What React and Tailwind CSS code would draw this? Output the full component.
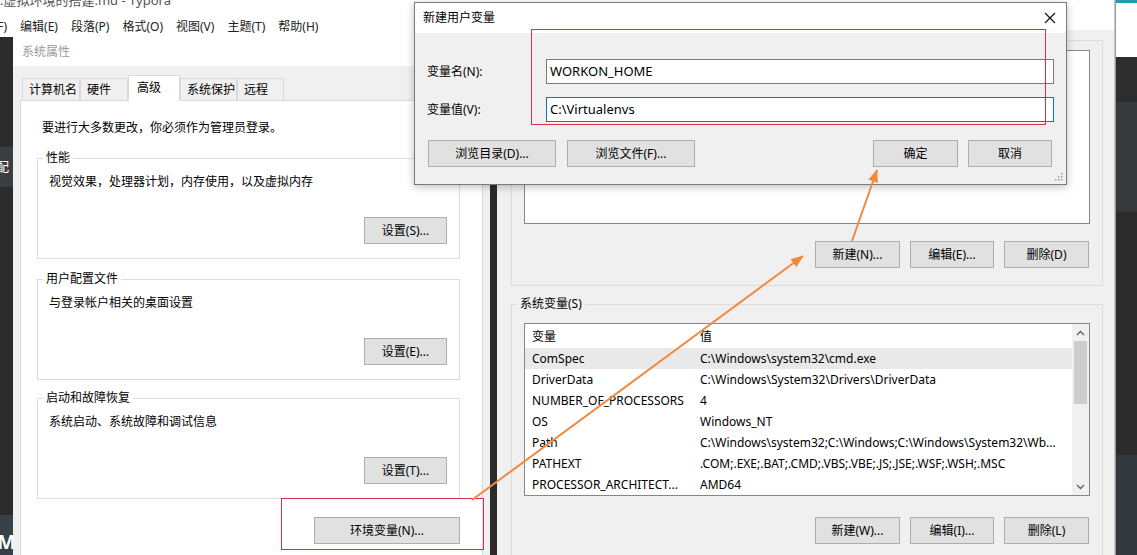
import React from "react";

const Btn = ({ children, className = "" }) => (
  <div
    className={
      "flex items-center justify-center h-[27px] bg-[#e1e1e1] border border-[#adadad] text-[12px] text-black " +
      className
    }
  >
    {children}
  </div>
);

const Group = ({ title, text, button }) => (
  <fieldset className="border border-[#dcdcdc] ml-[16px] mr-[22px] flex flex-col pb-[14px]">
    <legend className="ml-[5px] px-[3px] text-[12px] leading-[16px] text-black">{title}</legend>
    <p className="ml-[11px] mt-[8px] text-[12px] leading-[16px] text-black">{text}</p>
    <div className="flex justify-end mt-[27px] mr-[12px]">
      <Btn className="w-[83px]">{button}</Btn>
    </div>
  </fieldset>
);

const tabs = ["计算机名", "硬件", "高级", "系统保护", "远程"];
const tabW = ["w-[58px]", "w-[48px]", "w-[52px]", "w-[57px]", "w-[47px]"];

const sysVars = [
  ["ComSpec", "C:\\Windows\\system32\\cmd.exe"],
  ["DriverData", "C:\\Windows\\System32\\Drivers\\DriverData"],
  ["NUMBER_OF_PROCESSORS", "4"],
  ["OS", "Windows_NT"],
  ["Path", "C:\\Windows\\system32;C:\\Windows;C:\\Windows\\System32\\Wb..."],
  ["PATHEXT", ".COM;.EXE;.BAT;.CMD;.VBS;.VBE;.JS;.JSE;.WSF;.WSH;.MSC"],
  ["PROCESSOR_ARCHITECT...", "AMD64"],
];

const SystemProps = () => (
  <div className="absolute left-[13px] top-[37px] w-[477px] h-[540px] bg-[#f0f0f0] flex flex-col">
    <div className="h-[29px] bg-white flex items-center pl-[9px] text-[12px] text-[#9a9a9a]">系统属性</div>
    <div className="flex-1 flex flex-col px-[7px] pt-[9px]">
      <div className="flex items-end h-[25px] pl-[2px]">
        {tabs.map((t, i) =>
          i === 2 ? (
            <div
              key={t}
              className={"h-[26px] -mb-px bg-white border border-b-0 border-[#d9d9d9] flex items-start pt-[3px] pl-[8px] text-[12px] relative z-10 " + tabW[i]}
            >
              {t}
            </div>
          ) : (
            <div
              key={t}
              className={"h-[22px] bg-[#f0f0f0] border border-b-0 border-[#d9d9d9] flex items-center pl-[6px] text-[12px] " + tabW[i]}
            >
              {t}
            </div>
          )
        )}
      </div>
      <div className="flex-1 bg-white border border-[#d9d9d9] flex flex-col pt-[19px]">
        <p className="ml-[21px] text-[12px] leading-[16px] text-black">要进行大多数更改，你必须作为管理员登录。</p>
        <div className="mt-[14px]">
          <Group title="性能" text="视觉效果，处理器计划，内存使用，以及虚拟内存" button="设置(S)..." />
        </div>
        <div className="mt-[12px]">
          <Group title="用户配置文件" text="与登录帐户相关的桌面设置" button="设置(E)..." />
        </div>
        <div className="mt-[10px]">
          <Group title="启动和故障恢复" text="系统启动、系统故障和调试信息" button="设置(T)..." />
        </div>
        <div className="flex justify-end mt-[18px] mr-[22px]">
          <Btn className="w-[146px]">环境变量(N)...</Btn>
        </div>
      </div>
    </div>
  </div>
);

const EnvVars = () => (
  <div className="absolute left-[497px] top-0 w-[618px] h-[555px] bg-[#f0f0f0] border-r border-[#c8c8c8] flex flex-col">
    <div className="h-[30px] bg-white shrink-0"></div>
    <div className="flex flex-col pl-[14px] pr-[11px]">
      <fieldset className="border border-[#dcdcdc] flex flex-col pb-[17px] mt-[2px]">
        <legend className="ml-[6px] px-[3px] text-[12px] leading-[16px]">用户变量(U)</legend>
        <div className="mx-[12px] mt-[2px] h-[174px] bg-white border border-[#828790]"></div>
        <div className="flex justify-end gap-[10px] mt-[17px] mr-[13px]">
          <Btn className="w-[85px]">新建(N)...</Btn>
          <Btn className="w-[84px]">编辑(E)...</Btn>
          <Btn className="w-[85px]">删除(D)</Btn>
        </div>
      </fieldset>
      <fieldset className="border border-[#dcdcdc] flex flex-col pb-[20px] mt-[10px]">
        <legend className="ml-[5px] px-[3px] text-[12px] leading-[16px]">系统变量(S)</legend>
        <div className="mx-[12px] mt-[11px] h-[173px] bg-white border border-[#828790] flex overflow-hidden">
          <div className="flex-1 flex flex-col text-[12px] text-black">
            <div className="h-[24px] flex items-center shrink-0 pt-px">
              <span className="w-[175px] pl-[7px]">变量</span>
              <span>值</span>
            </div>
            {sysVars.map(([k, v], i) => (
              <div
                key={k}
                className={"h-[21px] flex items-center shrink-0 " + (i === 0 ? "bg-[#e9e9e9]" : "")}
              >
                <span className="w-[175px] pl-[7px] whitespace-nowrap overflow-hidden">{k}</span>
                <span className="flex-1 whitespace-nowrap overflow-hidden">{v}</span>
              </div>
            ))}
          </div>
          <div className="w-[17px] bg-[#f0f0f0] flex flex-col items-center">
            <div className="h-[17px] flex items-center justify-center">
              <svg width="9" height="6" viewBox="0 0 9 6">
                <path d="M1 5 L4.5 1.5 L8 5" fill="none" stroke="#606060" strokeWidth="1.3" />
              </svg>
            </div>
            <div className="w-[13px] h-[63px] bg-[#cdcdcd]"></div>
            <div className="flex-1"></div>
            <div className="h-[17px] flex items-center justify-center">
              <svg width="9" height="6" viewBox="0 0 9 6">
                <path d="M1 1 L4.5 4.5 L8 1" fill="none" stroke="#606060" strokeWidth="1.3" />
              </svg>
            </div>
          </div>
        </div>
        <div className="flex justify-end gap-[10px] mt-[21px] mr-[13px]">
          <Btn className="w-[85px]">新建(W)...</Btn>
          <Btn className="w-[84px]">编辑(I)...</Btn>
          <Btn className="w-[85px]">删除(L)</Btn>
        </div>
      </fieldset>
    </div>
  </div>
);

const NewVarDialog = () => (
  <div className="absolute left-[414px] top-[2px] w-[653px] h-[183px] border border-[#7a7a7a] bg-[#f0f0f0] flex flex-col shadow-[0_2px_8px_rgba(0,0,0,0.25)]">
    <div className="h-[30px] bg-white flex items-center justify-between pl-[8px] pr-[10px] shrink-0">
      <span className="text-[12px] text-black">新建用户变量</span>
      <svg width="12" height="12" viewBox="0 0 12 12">
        <path d="M1 1 L11 11 M11 1 L1 11" stroke="#111" strokeWidth="1.2" />
      </svg>
    </div>
    <div className="flex flex-col pl-[12px] pr-[12px] pt-[26px] relative flex-1">
      <div className="flex items-center">
        <span className="w-[119px] text-[12px]">变量名(N):</span>
        <div className="flex-1 h-[25px] bg-white border border-[#7a7a7a] flex items-center pl-[3px] text-[13px]">WORKON_HOME</div>
      </div>
      <div className="flex items-center mt-[13px]">
        <span className="w-[119px] text-[12px]">变量值(V):</span>
        <div className="flex-1 h-[25px] bg-white border border-[#0078d7] flex items-center pl-[3px] text-[13px]">C:\Virtualenvs</div>
      </div>
      <div className="flex items-center mt-[18px] pl-[1px]">
        <Btn className="w-[128px]">浏览目录(D)...</Btn>
        <Btn className="w-[128px] ml-[11px]">浏览文件(F)...</Btn>
        <div className="flex-1"></div>
        <Btn className="w-[85px]">确定</Btn>
        <Btn className="w-[84px] ml-[10px] mr-[2px]">取消</Btn>
      </div>
      <svg className="absolute right-[3px] bottom-[3px]" width="8" height="8" viewBox="0 0 8 8">
        <rect x="6" y="0" width="1.5" height="1.5" fill="#9a9a9a" />
        <rect x="3" y="3" width="1.5" height="1.5" fill="#9a9a9a" />
        <rect x="6" y="3" width="1.5" height="1.5" fill="#9a9a9a" />
        <rect x="0" y="6" width="1.5" height="1.5" fill="#9a9a9a" />
        <rect x="3" y="6" width="1.5" height="1.5" fill="#9a9a9a" />
        <rect x="6" y="6" width="1.5" height="1.5" fill="#9a9a9a" />
      </svg>
    </div>
    <div className="absolute left-[116px] top-[26px] w-[515px] h-[96px] border border-[#d9304a] z-20"></div>
  </div>
);

const menu = ["编辑(E)", "段落(P)", "格式(O)", "视图(V)", "主题(T)", "帮助(H)"];

export default function App() {
  return (
    <div className="relative w-[1137px] h-[555px] overflow-hidden bg-white font-['Noto_Sans','Noto_Sans_CJK_SC',sans-serif] text-black">
      {/* typora behind */}
      <div className="flex flex-col h-full">
        <div className="h-[16px] overflow-hidden">
          <p className="-mt-[9px] text-[13px] text-[#555] whitespace-nowrap">.虚拟环境的搭建.md - Typora</p>
        </div>
        <div className="h-[21px] flex items-center gap-[13px] text-[12px] text-[#222] -ml-[3px]">
          <span>F)</span>
          {menu.map((m) => (
            <span key={m}>{m}</span>
          ))}
        </div>
        <div className="flex-1 bg-[#2b2b2b] flex">
          <div className="w-[13px] flex flex-col">
            <div className="h-[110px]"></div>
            <div className="h-[40px] bg-[#3b3e41] flex items-center overflow-hidden text-[13px] text-white">
              <span className="-ml-[4px]">配</span>
            </div>
            <div className="flex-1"></div>
            <div className="h-[40px] bg-[#384048] flex items-end overflow-hidden text-[20px] leading-[26px] text-white font-bold">
              <span className="-ml-[3px]">M</span>
            </div>
          </div>
          <div className="flex-1"></div>
        </div>
      </div>

      {/* right edge window */}
      <div className="absolute left-[1115px] top-0 w-[22px] h-[555px] flex flex-col border-l border-[#9a9a9a]">
        <div className="h-[3px] bg-[#1ba0b3]"></div>
        <div className="h-[54px] bg-white"></div>
        <div className="h-[45px] bg-[#2d2d2d]"></div>
        <div className="h-[110px] bg-[#363a3d]"></div>
        <div className="flex-1 bg-[#2b2b2b]"></div>
        <div className="h-[100px] bg-[#33383d]"></div>
      </div>

      <SystemProps />
      <EnvVars />
      <NewVarDialog />

      {/* annotations */}
      <div className="absolute left-[281px] top-[498px] w-[203px] h-[52px] border border-[#d9304a]"></div>
      <svg className="absolute left-0 top-0 pointer-events-none" width="1137" height="555" viewBox="0 0 1137 555">
        <defs>
          <marker id="ah" markerWidth="13" markerHeight="10" refX="12" refY="5" orient="auto" markerUnits="userSpaceOnUse">
            <path d="M0 0 L13 5 L0 10 Z" fill="#f08a3f" />
          </marker>
        </defs>
        <line x1="472" y1="500" x2="803" y2="256" stroke="#f08a3f" strokeWidth="2" markerEnd="url(#ah)" />
        <line x1="852" y1="241" x2="877" y2="170" stroke="#f08a3f" strokeWidth="2" markerEnd="url(#ah)" />
      </svg>
    </div>
  );
}
